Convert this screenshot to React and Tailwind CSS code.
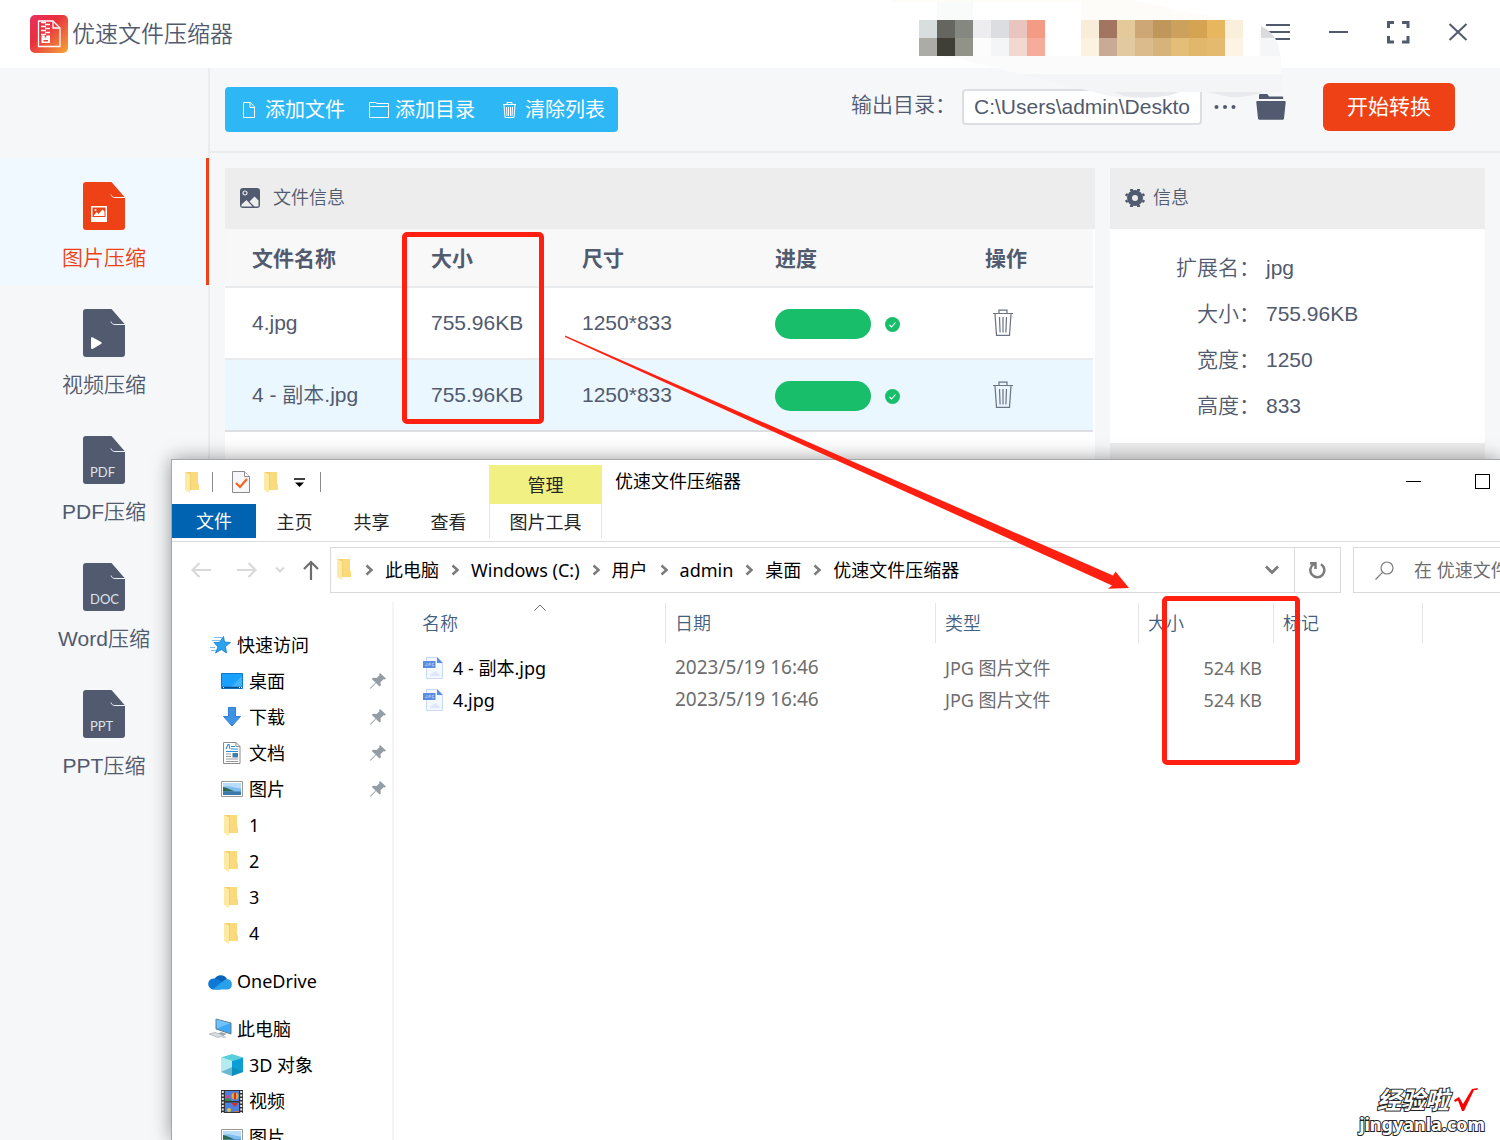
import React from 'react';

const NAV_ITEMS = [
  { label: '图片压缩', kind: 'image', active: true },
  { label: '视频压缩', kind: 'video' },
  { label: 'PDF压缩', kind: 'PDF' },
  { label: 'Word压缩', kind: 'DOC' },
  { label: 'PPT压缩', kind: 'PPT' },
];

const FILES = [
  { name: '4.jpg', size: '755.96KB', dims: '1250*833' },
  { name: '4 - 副本.jpg', size: '755.96KB', dims: '1250*833', selected: true },
];

const INFO = [
  ['扩展名：', 'jpg'],
  ['大小：', '755.96KB'],
  ['宽度：', '1250'],
  ['高度：', '833'],
];

const CRUMBS = ['此电脑', 'Windows (C:)', '用户', 'admin', '桌面', '优速文件压缩器'];

const EXPLORER_FILES = [
  { name: '4 - 副本.jpg', date: '2023/5/19 16:46', type: 'JPG 图片文件', size: '524 KB' },
  { name: '4.jpg', date: '2023/5/19 16:46', type: 'JPG 图片文件', size: '524 KB' },
];

// Colours of the pixelated strip in the title bar, one row per 18px band
const MOSAIC = [
  { x: 28, y: 20, cells: ['#d8dedd', '#64665f', '#858880', '#ededef', '#dcdde1', '#eac5bf', '#f49b85'] },
  { x: 28, y: 38, cells: ['#abaca6', '#3f3f37', '#919389', '#fcfcfc', '#f4f5f7', '#f3d8d2', '#f6ab9b'] },
  { x: 190, y: 20, cells: ['#f9ecd8', '#a17560', '#e4c99a', '#cda776', '#c0975b', '#cca15b', '#d4a453', '#e6b75f', '#f9efdb'] },
  { x: 190, y: 38, cells: ['#fcf2e0', '#c9aa94', '#e3c9a0', '#dbba8b', '#d8b27b', '#e4be76', '#e1b76b', '#e3ba6e', '#fdf4e6'] },
];

/* ---------- icons of the compressor ---------- */

const LogoIcon = () => (
  <svg width="38" height="38" viewBox="0 0 38 38">
    <defs>
      <linearGradient id="logoFill" x1="0" y1="0" x2="1" y2="1">
        <stop offset="0" stopColor="#e8305f" />
        <stop offset="0.4" stopColor="#e8303f" />
        <stop offset="1" stopColor="#f5a836" />
      </linearGradient>
    </defs>
    <rect width="38" height="38" rx="5" fill="url(#logoFill)" />
    <path d="M8.500 6h14.500l7 7v18.500h-21.500z" fill="none" stroke="#fff" strokeWidth="1.300" strokeLinejoin="round" />
    <path d="M23 6v7h7" fill="none" stroke="#fff" strokeWidth="1.300" />
    <path d="M11 7.500h5m-1 2h5m-9 2h5m-1 2h5m-9 2h5m-1 2h5m-9 2h5" stroke="#fff" strokeWidth="1.300" />
    <path d="M11.500 20.500h8.500v7.500h-8.500z" fill="#fff" />
    <path d="M13.500 25h4.500v1.500h-4.500z" fill="#e8403f" />
    <path d="M15.500 20v2.500" stroke="#e8403f" strokeWidth="1.500" />
  </svg>
);

const NavIcon = ({ kind, active }) => (
  <svg width="43" height="48" viewBox="0 0 43 48">
    <path
      d="M3 0H28.500L42 15.500V45a3 3 0 0 1-3 3H3a3 3 0 0 1-3-3V3a3 3 0 0 1 3-3z"
      fill={active ? '#ee4115' : '#515a6e'}
    />
    <path d="M28 12.500c.5 2 2 3 4 3h10" fill="none" stroke="#eef3f8" strokeWidth="1" />
    {kind === 'image' && (
      <g>
        <path d="M8 24h16v16H8z" fill="#fff" />
        <path d="M9.500 25.500h13v9.500h-13z" fill="#ee4115" />
        <path d="M10.500 34l3-4 2 2 4-4.500 2 2V34z" fill="#fff" />
        <circle cx="12.500" cy="28" r="1" fill="#fff" />
      </g>
    )}
    {kind === 'video' && <path d="M8 29c0-1 1-1 2-.5l8 4.500c1 .6 1 1.400 0 2l-8 4.700c-1 .5-2 .3-2-.7z" fill="#fff" />}
    {kind !== 'image' && kind !== 'video' && (
      <text x="7" y="41" fontSize="13" fill="#dfe3ea" fontFamily="Lato, sans-serif">{kind}</text>
    )}
  </svg>
);

const FileIcon = () => (
  <svg width="20" height="20" viewBox="0 0 20 20" fill="none" stroke="#fff" strokeWidth="1">
    <path d="M4.500 2.500h7l4 4.500v10.500h-11zM11 2.500v5h4.500" />
  </svg>
);

const FolderLineIcon = () => (
  <svg width="20" height="20" viewBox="0 0 20 20" fill="none" stroke="#fff" strokeWidth="1">
    <path d="M.5 17.500v-15h6l1.500 1h11.500v14zM.5 6.500h19" />
  </svg>
);

const BinLineIcon = () => (
  <svg width="20" height="20" viewBox="0 0 20 20" fill="none" stroke="#fff" strokeWidth="1">
    <path d="M4 4.500h13M8 4V2.500h5V4M5 5l1 12.500h9L16 5M7.500 7l.5 9M9.500 7v9M11.500 7v9M13.500 7L13 16" />
  </svg>
);

const TrashIcon = () => (
  <svg width="20" height="28" viewBox="0 0 20 28" fill="none" stroke="#6b7284" strokeWidth="1.200">
    <path d="M0 4.500h20M6 4V1.200h8V4M2 5l1.500 21.300h13L18 5M6.500 8l.6 15.500M10 8v15.500M13.500 8l-.6 15.500" />
  </svg>
);

const PictureIcon = () => (
  <svg width="20" height="20" viewBox="0 0 20 20">
    <rect width="20" height="20" rx="3" fill="#515a6e" />
    <circle cx="5" cy="5" r="2" fill="none" stroke="#ededed" strokeWidth="1.200" />
    <path d="M1.500 18.500v-2L6.500 12l6 6.500zM9.500 13.500l5-5 4 4v5c0 .6-.4 1-1 1h-3z" fill="#ededed" />
  </svg>
);

const GearIcon = () => (
  <svg width="20" height="20" viewBox="0 0 20 20">
    <circle cx="10" cy="10" r="5.500" fill="none" stroke="#515a6e" strokeWidth="5" />
    <path
      d="M6.500 3V1M13.500 3V1M6.500 19v-2M13.500 19v-2M2.500 7.500L.8 6M2.500 12.500L.8 14M17.500 7.500L19.200 6M17.500 12.500L19.200 14"
      stroke="#515a6e"
      strokeWidth="3"
    />
  </svg>
);

const DoneIcon = () => (
  <svg width="15" height="15" viewBox="0 0 15 15">
    <circle cx="7.500" cy="7.500" r="7.500" fill="#19be6b" />
    <path d="M4.500 8l2 2 4-4.500" fill="none" stroke="#fff" strokeWidth="1.100" />
  </svg>
);

/* ---------- icons of the explorer ---------- */

const YellowFolder = () => (
  <svg width="16" height="22" viewBox="0 0 16 22">
    <path d="M0 1h13v12l1 1v5H0z" fill="#f3cf6e" />
    <path d="M6 1h7v12l1 1v5H6z" fill="#fada7d" />
    <path d="M0 1l5 2.500V22l-5-3z" fill="#ffeaa3" />
  </svg>
);

const StarIcon = () => (
  <svg width="22" height="20" viewBox="0 0 22 20">
    <path d="M5 2.500h8M3 5.500h8M1 12.500h5M2 15.500h5" stroke="#7cc0ee" strokeWidth="1" />
    <path d="M14.500 1.500l1 5.500 6 .5-5 4 1 6.500-5-3.500-6 3.500 2.500-6-4-4.500 5.500-.2z" fill="#2ba3f0" stroke="#1479c9" strokeWidth=".8" />
  </svg>
);

const DesktopIcon = () => (
  <svg width="22" height="16" viewBox="0 0 22 16">
    <path d="M.5.5h21v15H.5z" fill="#1aa0ff" stroke="#0f78c8" />
    <path d="M10 14L21 3v11z" fill="#45b2ff" />
    <path d="M1 14.500h20" stroke="#0a4f8c" strokeWidth="1.500" />
    <path d="M2 14.500h1M18 14.500h1M20 14.500h1" stroke="#fff" />
  </svg>
);

const DownloadIcon = () => (
  <svg width="22" height="22" viewBox="0 0 22 22">
    <path d="M7.500 1.500h7v9h5L11 20 2.500 10.500h5z" fill="#3f93e4" stroke="#2f7fd0" />
  </svg>
);

const DocumentIcon = () => (
  <svg width="22" height="22" viewBox="0 0 22 22">
    <path d="M2.500.5H15l4 4v17H2.500z" fill="#fff" stroke="#8b8b8b" />
    <path d="M15 .5v4h4" fill="none" stroke="#8b8b8b" />
    <path d="M5 7l2-4.500h1L9 7M10 4.500h4M10 7h7M5 9.500h12" fill="none" stroke="#2b8fd8" strokeWidth="1.100" />
    <path d="M5 12h5M5 14.500h5M5 17h12M5 19.500h12" stroke="#9a9a9a" />
    <path d="M11.500 11h5.500v4.500h-5.500z" fill="#3c7fa8" />
  </svg>
);

const PhotoIcon = () => (
  <svg width="22" height="16" viewBox="0 0 22 16">
    <path d="M.5.500h21v15H.5z" fill="#fff" stroke="#9a9a9a" />
    <path d="M2 2h18v12H2z" fill="#7fbdf0" />
    <path d="M2 6c5-2 8 0 18 1.500V2H2z" fill="#b9dcf8" />
    <path d="M2 6c4 .5 8 3 12 4.500H2z" fill="#2f6a4f" />
    <path d="M2 10.500h18V14H2z" fill="#3c79ad" />
  </svg>
);

const CloudIcon = () => (
  <svg width="24" height="17" viewBox="0 0 24 17">
    <path d="M6.500 6a7 7 0 0 1 12.500 0l-6 5z" fill="#0364b8" />
    <path d="M5 16.500A5.300 5.300 0 0 1 6.500 5.500c4 0 6 3 10 5l-4 6z" fill="#0f78d4" />
    <path d="M19 6a5.300 5.300 0 0 1 .5 10.500H4.500L16.500 7z" fill="#28a0ea" />
  </svg>
);

const ComputerIcon = () => (
  <svg width="24" height="22" viewBox="0 0 24 22">
    <path d="M8 1l15 4v11L8 11z" fill="#3da8f5" stroke="#6b7b88" />
    <path d="M8.500 1.500L22 5.200 9 10.500z" fill="#6fc2fb" />
    <path d="M13 14l6 2-4 1.500-5-1.500z" fill="#9aa4ac" />
    <path d="M1 16l6-1.500 9 3-6 2z" fill="#d8dde2" stroke="#a3abb3" strokeWidth=".7" />
    <path d="M13 19l3-1 3 1-3 1.200z" fill="#c5cbd1" />
  </svg>
);

const CubeIcon = () => (
  <svg width="22" height="22" viewBox="0 0 22 22">
    <path d="M0 3.500L11 0l11 3.500L11 7z" fill="#58d0dc" />
    <path d="M0 3.500L11 7v15L0 18z" fill="#b5eaf0" />
    <path d="M22 3.500L11 7v15l11-4z" fill="#0c9fd6" />
    <path d="M0 18l11-5v9zM11 13l11 5-11 4z" fill="#0a7fa8" opacity=".45" />
  </svg>
);

const FilmIcon = () => (
  <svg width="22" height="23" viewBox="0 0 22 23">
    <path d="M0 0h22v23H0z" fill="#333" />
    <path d="M1.800 1v22M20.200 1v22" stroke="#e8e8e8" strokeWidth="2" strokeDasharray="2 1.500" />
    <path d="M4 1h14v10H4zM4 12.500h14V22H4z" fill="#4d7fe0" />
    <circle cx="14" cy="6" r="3.500" fill="#e8a72a" />
    <path d="M13 2.500h2v7h-2z" fill="#c8342d" />
    <circle cx="7" cy="7" r="2" fill="#d8459a" />
    <path d="M4 9l4-1 3 3H4z" fill="#2f8f4a" />
    <path d="M10 13h7l-3 4z" fill="#d3302a" />
    <circle cx="8" cy="20" r="2" fill="#e8c62a" />
    <path d="M13 22a3 3 0 0 1 5 0z" fill="#e86a2a" />
  </svg>
);

const PinIcon = () => (
  <svg width="16" height="16" viewBox="0 0 16 16">
    <path d="M10 0l6 5.500-1.500 1-1-.3-3 3 .3 3.300-1.300 1L6 10 1 15.500l-1 .3.300-1L5.500 9.500 1.800 6l1.200-1.300 3.500.2 3-2.700-.4-1.200z" fill="#929da5" />
  </svg>
);

const JpgIcon = () => (
  <svg className="shrink-0" width="20" height="22" viewBox="0 0 20 22">
    <path d="M3.500.5H14l5.500 5.500v15.500h-16z" fill="#f3f7fe" stroke="#c9daf6" />
    <path d="M14 0l6 6h-6z" fill="#5b8ee0" />
    <path d="M7 19c0-2 1.500-2.500 2.500-2.500 1-3 4.500-3 5 0 1.500 0 2.500 1 2.500 2.500z" fill="#dbe7fb" />
    <path d="M0 4h12.500v7H0z" fill="#5b8ee0" />
    <path d="M4 6v2.500H2.500M6 9V6.500h1.500v1.200H6M11 6.500H9.300V9H11V8" fill="none" stroke="#bcd3f7" strokeWidth=".7" />
  </svg>
);

const CrumbChevron = () => (
  <svg width="32" height="12" viewBox="0 0 32 12" fill="none" stroke="#7b7b7b" strokeWidth="2.500">
    <path d="M13.500 1.500l5 4.500-5 4.500" />
  </svg>
);

const TREE = [
  {
    label: '快速访问',
    icon: <StarIcon />,
    children: [
      { label: '桌面', icon: <DesktopIcon />, pinned: true },
      { label: '下载', icon: <DownloadIcon />, pinned: true },
      { label: '文档', icon: <DocumentIcon />, pinned: true },
      { label: '图片', icon: <PhotoIcon />, pinned: true },
      { label: '1', icon: <YellowFolder /> },
      { label: '2', icon: <YellowFolder /> },
      { label: '3', icon: <YellowFolder /> },
      { label: '4', icon: <YellowFolder /> },
    ],
  },
  { label: 'OneDrive', icon: <CloudIcon />, children: [] },
  {
    label: '此电脑',
    icon: <ComputerIcon />,
    children: [
      { label: '3D 对象', icon: <CubeIcon /> },
      { label: '视频', icon: <FilmIcon /> },
      { label: '图片', icon: <PhotoIcon /> },
    ],
  },
];

/* ---------- compressor window ---------- */

const TitleBar = () => (
  <header className="flex h-[68px] shrink-0 items-center justify-between bg-white pl-[30px] pr-[30px]">
    <div className="flex items-center gap-1">
      <LogoIcon />
      <h1 className="text-[23px] font-[350]">优速文件压缩器</h1>
    </div>
    <div className="flex items-center gap-9 pb-1">
      <button aria-label="菜单">
        <svg width="24" height="24" viewBox="0 0 24 24" stroke="#515a6e" strokeWidth="2">
          <path d="M0 5h24M0 12h24M0 19h24" />
        </svg>
      </button>
      <button aria-label="最小化">
        <svg width="24" height="24" viewBox="0 0 24 24" stroke="#515a6e" strokeWidth="2">
          <path d="M3 12h19" />
        </svg>
      </button>
      <button aria-label="全屏">
        <svg width="24" height="24" viewBox="0 0 24 24" fill="none" stroke="#515a6e" strokeWidth="3">
          <path d="M2.500 8V2.500H8M16 2.500h6V8M22 16v6h-6M8 22H2.500v-6" />
        </svg>
      </button>
      <button aria-label="关闭">
        <svg width="24" height="24" viewBox="0 0 24 24" stroke="#515a6e" strokeWidth="2">
          <path d="M3.500 4l17 16M20.500 4l-17 16" />
        </svg>
      </button>
    </div>
  </header>
);

// Smudged strip that hides the account name
const Mosaic = () => (
  <svg className="pointer-events-none absolute right-[209px] top-0" width="400" height="100" viewBox="0 0 400 100">
    <path d="M0 0h240c30 5 60 14 94 18v2H190V2H0z" fill="#fefcf8" />
    <path d="M46 2h36v18H46z" fill="#f9fafa" />
    <path d="M28 54c30 2 60 9 100 20h262c2-20-2-38-22-46v28H28z" fill="#fbfbfb" />
    <path d="M128 74c30 7 60 14 90 22 20 3 50 2 65-4h108V74z" fill="#f4f5f6" />
    <path d="M222 92h66c-10 6-40 7-55 4zM316 92h55c-8 4-25 6-33 5z" fill="#e9eaed" />
    <path d="M370 26c6 3 11 7 14 12h-14z" fill="#d9dbdf" />
    <path d="M370 38h14c3 5 5 11 5 18h-19z" fill="#f5f6f7" />
    {MOSAIC.map(row =>
      row.cells.map((color, i) => (
        <rect key={`${row.x}-${row.y}-${i}`} x={row.x + i * 18} y={row.y} width="18" height="18" fill={color} />
      ))
    )}
  </svg>
);

const SideNav = () => (
  <nav className="w-[210px] shrink-0 border-r-2 border-[#ebecee] pt-[90px]">
    {NAV_ITEMS.map(item => (
      <a
        key={item.kind}
        href="#"
        className={
          item.active
            ? '-mr-px flex h-[127px] flex-col items-center border-r-[3px] border-[#ee4115] bg-[#f0f9ff] pl-[2px] pt-6 text-[#ee4115]'
            : 'flex h-[127px] flex-col items-center pt-6'
        }
      >
        <NavIcon kind={item.kind} active={item.active} />
        <span className="mt-3 text-[21px] font-[350] leading-[31px]">{item.label}</span>
      </a>
    ))}
  </nav>
);

const Toolbar = () => (
  <div className="flex h-[85px] shrink-0 items-center justify-between border-b-2 border-[#ebecee] pl-[15px] pr-[45px]">
    <div className="flex h-[45px] items-center gap-6 rounded bg-[#2db7f5] pl-[14px] pr-[13px] text-xl text-white">
      <button className="flex items-center gap-[6px]"><FileIcon />添加文件</button>
      <button className="flex items-center gap-[6px]"><FolderLineIcon />添加目录</button>
      <button className="flex items-center gap-[6px]"><BinLineIcon />清除列表</button>
    </div>
    <div className="flex items-center pb-[6px]">
      <label htmlFor="outdir" className="pb-1 text-[21px] font-[350]">输出目录：</label>
      <input
        id="outdir"
        type="text"
        defaultValue="C:\Users\admin\Deskto"
        className="ml-[6px] h-9 w-[240px] rounded border-2 border-[#dcdee2] bg-white pl-[10px] text-[21px]"
      />
      <button aria-label="浏览" className="ml-3">
        <svg width="22" height="6" viewBox="0 0 22 6" fill="#515a6e">
          <circle cx="2.500" cy="3" r="2" />
          <circle cx="11" cy="3" r="2" />
          <circle cx="19.500" cy="3" r="2" />
        </svg>
      </button>
      <button aria-label="打开目录" className="ml-5">
        <svg width="30" height="26" viewBox="0 0 30 26" fill="#515a6e">
          <path d="M3 5V1.500c0-.8.400-1.500 1.200-1.500h7l2 2.500H26c.8 0 1.200.4 1.200 1.200V5z" />
          <path d="M1.500 7h27c.8 0 1.300.5 1.200 1.300L28 24.500c0 .8-.6 1.200-1.300 1.200H3.300c-.8 0-1.300-.4-1.300-1.200L.3 8.300C.2 7.500.700 7 1.500 7z" />
        </svg>
      </button>
      <button className="ml-[37px] h-12 w-[132px] rounded-md bg-[#ee4115] text-[21px] text-white">开始转换</button>
    </div>
  </div>
);

const FilePanel = () => (
  <section className="flex-1 bg-white">
    <h2 className="flex h-[61px] items-center gap-[13px] bg-[#ededed] pb-[2px] pl-[15px] text-lg font-[350]">
      <PictureIcon />
      文件信息
    </h2>
    <div className="pr-[2px]">
      <table className="w-full table-fixed border-collapse text-left text-[21px]">
        <thead>
          <tr className="h-[58px] border-b-2 border-[#e8eaec] bg-[#f8f8f9]">
            <th className="w-[179px] pl-[27px] pt-[2px] font-bold">文件名称</th>
            <th className="w-[151px] pl-[27px] pt-[2px] font-bold">大小</th>
            <th className="w-[193px] pl-[27px] pt-[2px] font-bold">尺寸</th>
            <th className="w-[210px] pl-[27px] pt-[2px] font-bold">进度</th>
            <th className="pl-[27px] pt-[2px] font-bold">操作</th>
          </tr>
        </thead>
        <tbody>
          {FILES.map(file => (
            <tr
              key={file.name}
              className={
                file.selected
                  ? 'h-[72px] border-b-2 border-[#dcdee2] bg-[#ebf7ff]'
                  : 'h-[72px] border-b-2 border-[#e8eaec]'
              }
            >
              <td className="pl-[27px] font-[350]">{file.name}</td>
              <td className="pl-[27px]">{file.size}</td>
              <td className="pl-[27px]">{file.dims}</td>
              <td className="pl-[27px] pt-[2px]">
                <div className="flex items-center gap-[14px]">
                  <div className="h-[30px] w-24 rounded-full bg-[#19be6b]" />
                  <DoneIcon />
                </div>
              </td>
              <td className="pl-[27px]">
                <button aria-label="删除" className="block px-2"><TrashIcon /></button>
              </td>
            </tr>
          ))}
        </tbody>
      </table>
    </div>
  </section>
);

const InfoPanel = () => (
  <section className="w-[375px] shrink-0 bg-[#ededed]">
    <h2 className="flex h-[61px] items-center gap-2 pb-[2px] pl-[15px] text-lg font-[350]">
      <GearIcon />
      信息
    </h2>
    <dl className="bg-white pb-[14px] pt-4 text-[21px] leading-[46px]">
      {INFO.map(([label, value]) => (
        <div key={label} className="flex gap-[6px]">
          <dt className="w-[150px] text-right font-[350]">{label}</dt>
          <dd>{value}</dd>
        </div>
      ))}
    </dl>
  </section>
);

/* ---------- explorer window ---------- */

const QuickBar = () => (
  <div className="flex h-[44px] items-center pl-[13px]">
    <YellowFolder />
    <div className="ml-[11px] h-5 w-px bg-[#8a8a8a]" />
    <svg className="ml-[19px]" width="18" height="22" viewBox="0 0 18 22">
      <path d="M.5.500h12l5 5v16H.5z" fill="#f7f7f9" stroke="#8b8b8b" />
      <path d="M12.500.500v5h5" fill="#fff" stroke="#8b8b8b" />
      <path d="M4 12l4 4 7-8" fill="none" stroke="#f2641f" strokeWidth="2.200" />
    </svg>
    <div className="ml-[14px]"><YellowFolder /></div>
    <svg className="ml-[14px]" width="11" height="10" viewBox="0 0 11 10">
      <path d="M0 2h11" stroke="#000" strokeWidth="1.500" />
      <path d="M1 5.500h9L5.500 10z" />
    </svg>
    <div className="ml-[15px] h-5 w-px bg-[#8a8a8a]" />
  </div>
);

const Ribbon = () => (
  <div className="flex h-[82px] shrink-0 border-b border-[#dadbdc] text-lg text-[#262626]">
    <div className="w-[317px] shrink-0">
      <QuickBar />
      <div className="flex h-[34px]">
        <button className="w-[84px] bg-[#0063b1] text-white">文件</button>
        <button className="w-[77px] pt-[2px]">主页</button>
        <button className="w-[77px] pt-[2px]">共享</button>
        <button className="w-[77px] pt-[2px]">查看</button>
      </div>
    </div>
    <div className="w-[113px] shrink-0 pt-[5px]">
      <div className="flex h-[39px] items-center justify-center bg-[#f1f083]">管理</div>
      <button className="h-[34px] w-full border-x border-[#e3e3e3] pt-[2px]">图片工具</button>
    </div>
    <div className="flex h-[44px] flex-1 items-center pb-[2px] pl-[13px] text-black">
      <span className="flex-1">优速文件压缩器</span>
      <button aria-label="最小化" className="h-[15px] w-[15px]">
        <div className="h-px bg-black" />
      </button>
      <button aria-label="最大化" className="ml-[54px] mr-[10px] h-[15px] w-[15px] border border-black" />
    </div>
  </div>
);

const AddressBar = () => (
  <div className="flex h-[56px] shrink-0 items-center overflow-hidden text-lg text-black">
    <div className="flex w-[158px] shrink-0 items-center pl-[19px]">
      <svg width="20" height="16" viewBox="0 0 20 16" fill="none" stroke="#d9d9d9" strokeWidth="2.200">
        <path d="M20 8H2M8.500 1L1.500 8l7 7" />
      </svg>
      <svg className="ml-[26px]" width="20" height="16" viewBox="0 0 20 16" fill="none" stroke="#d9d9d9" strokeWidth="2.200">
        <path d="M0 8h18M11.500 1l7 7-7 7" />
      </svg>
      <svg className="ml-[18px]" width="10" height="8" viewBox="0 0 10 8" fill="none" stroke="#d9d9d9" strokeWidth="2.200">
        <path d="M1 1.500l4 4 4-4" />
      </svg>
      <svg className="ml-[18px]" width="16" height="20" viewBox="0 0 16 20" fill="none" stroke="#6d6d6d" strokeWidth="2.200">
        <path d="M8 20V2M1 9l7-7 7 7" />
      </svg>
    </div>
    <div className="flex h-[46px] flex-1 items-center border border-[#d9d9d9]">
      <div className="pb-[2px] pl-[6px]"><YellowFolder /></div>
      <nav className="flex flex-1 items-center whitespace-nowrap">
        {CRUMBS.map(crumb => (
          <React.Fragment key={crumb}>
            <CrumbChevron />
            <a href="#">{crumb}</a>
          </React.Fragment>
        ))}
      </nav>
      <button aria-label="历史" className="px-[15px]">
        <svg width="14" height="10" viewBox="0 0 14 10" fill="none" stroke="#7b7b7b" strokeWidth="2.800">
          <path d="M1 1.500l6 6 6-6" />
        </svg>
      </button>
      <button aria-label="刷新" className="flex h-full w-[46px] items-center justify-center border-l border-[#d9d9d9]">
        <svg width="18" height="18" viewBox="0 0 18 18" fill="none" stroke="#7b7b7b" strokeWidth="2.500">
          <path d="M12 3.200a7 7 0 1 1-7-.2M1 2.300h5.500V8" />
        </svg>
      </button>
    </div>
    <div className="ml-3 flex h-[46px] w-[147px] shrink-0 items-center gap-5 overflow-hidden border border-r-0 border-[#d9d9d9] pl-[21px]">
      <svg className="shrink-0" width="19" height="19" viewBox="0 0 19 19" fill="none" stroke="#7b7b7b" strokeWidth="1.200">
        <circle cx="12" cy="7" r="6" />
        <path d="M7.800 11.200L.5 18.500" />
      </svg>
      <input
        aria-label="搜索"
        placeholder="在 优速文件压缩器 中搜索"
        className="w-[220px] shrink-0 bg-transparent placeholder:text-[#6d6d6d]"
      />
    </div>
  </div>
);

const TreeRow = ({ item, nested }) => (
  <a href="#" className={nested ? 'flex h-9 items-center pl-[47px] pr-[6px]' : 'flex h-9 items-center pl-[35px] pr-[6px]'}>
    <span className="flex w-[26px] shrink-0 items-center justify-center">{item.icon}</span>
    <span className="flex-1 pl-1">{item.label}</span>
    {item.pinned && <PinIcon />}
  </a>
);

const FolderTree = () => (
  <nav className="mt-[4px] flex w-[222px] shrink-0 flex-col gap-3 border-r-2 border-[#f5f5f5] pt-[25px] text-lg text-black">
    {TREE.map(group => (
      <div key={group.label}>
        <TreeRow item={group} />
        {group.children.map(child => (
          <TreeRow key={child.label} item={child} nested />
        ))}
      </div>
    ))}
  </nav>
);

const HEADS = [
  { label: '名称', width: 'w-[253px]', sorted: true },
  { label: '日期', width: 'w-[270px]' },
  { label: '类型', width: 'w-[203px]' },
  { label: '大小', width: 'w-[135px]' },
  { label: '标记', width: 'w-[149px]' },
];

const FileList = () => (
  <div className="min-w-0 flex-1 pl-[19px] pt-[5px]">
    <table className="table-fixed border-collapse text-left text-lg text-[#6d6d6d]">
      <thead>
        <tr>
          {HEADS.map(head => (
            <th key={head.label} className={`${head.width} p-0 pb-[9px] font-[350] text-[#44607f]`}>
              <div className="relative flex h-10 items-center border-r border-[#e5e5e5] pl-[9px]">
                {head.sorted && (
                  <svg className="absolute left-[121px] top-px" width="12" height="7" viewBox="0 0 12 7" fill="none" stroke="#6d6d6d">
                    <path d="M.5 6.500L6 1l5.500 5.500" />
                  </svg>
                )}
                {head.label}
              </div>
            </th>
          ))}
        </tr>
      </thead>
      <tbody>
        {EXPLORER_FILES.map(file => (
          <tr key={file.name} className="h-8">
            <td className="py-0 pl-[10px] text-black">
              <div className="flex items-center gap-[10px]"><JpgIcon />{file.name}</div>
            </td>
            <td className="py-0 pl-[9px] text-[19px]">{file.date}</td>
            <td className="py-0 pl-[9px]">{file.type}</td>
            <td className="py-0 pr-3 text-right">{file.size}</td>
            <td />
          </tr>
        ))}
      </tbody>
    </table>
  </div>
);

const ExplorerWindow = () => (
  <div className="absolute bottom-0 left-[171px] right-0 top-[459px] flex flex-col overflow-hidden border-l border-t border-[#a5a7aa] bg-white font-['Noto_Sans','Noto_Sans_CJK_SC',sans-serif] shadow-[0_0_18px_rgba(0,0,0,0.4)]">
    <Ribbon />
    <AddressBar />
    <div className="flex min-h-0 flex-1">
      <FolderTree />
      <FileList />
    </div>
  </div>
);

/* ---------- red marks and watermark over everything ---------- */

const Marks = () => (
  <div className="pointer-events-none absolute inset-0">
    <div className="absolute left-[402px] top-[232px] h-[192px] w-[142px] rounded-[5px] border-[5px] border-[#ff2012]" />
    <div className="absolute left-[1162px] top-[596px] h-[169px] w-[138px] rounded-[5px] border-[5px] border-[#ff2012]" />
    <svg className="absolute left-[564px] top-[335px]" width="570" height="260" viewBox="564 335 570 260">
      <path d="M565 335.500L1113 575.500l2.500-4L1129 588l-21 .7 4-3.200L565 337z" fill="#ff2012" />
    </svg>
    <div className="absolute bottom-[6px] right-[15px] flex flex-col gap-[2px] text-right font-['Noto_Sans','Noto_Sans_CJK_SC',sans-serif] font-bold text-white [-webkit-text-stroke:2px_#222] [paint-order:stroke]">
      <div className="flex items-center justify-end gap-1 pr-[6px] text-2xl italic leading-6">
        经验啦
        <svg width="26" height="24" viewBox="0 0 26 24">
          <path d="M1 12l5-3 4 7L19 1l6-1-1 2h-3L11 23H9L5 12.500 2 14z" fill="#f00" stroke="none" />
        </svg>
      </div>
      <div className="text-lg leading-5">jingyanla.com</div>
    </div>
  </div>
);

export default function App() {
  return (
    <div className="relative flex h-screen flex-col overflow-hidden bg-[#f5f7f9] font-['Liberation_Sans','Noto_Sans_CJK_SC',sans-serif] text-[#515a6e]">
      <TitleBar />
      <div className="flex flex-1">
        <SideNav />
        <main className="flex min-w-0 flex-1 flex-col">
          <Toolbar />
          <div className="flex flex-1 gap-[15px] px-[15px] pt-[15px]">
            <FilePanel />
            <InfoPanel />
          </div>
        </main>
      </div>
      <Mosaic />
      <ExplorerWindow />
      <Marks />
    </div>
  );
}
